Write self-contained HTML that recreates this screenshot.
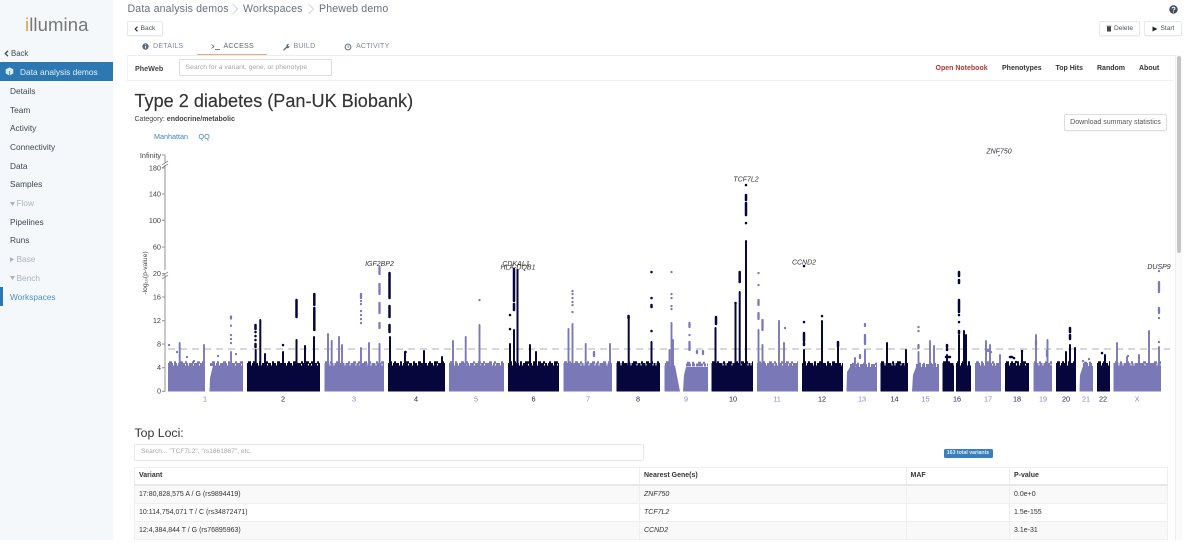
<!DOCTYPE html>
<html lang="en"><head><meta charset="utf-8"><title>Pheweb demo</title>
<style>
html,body{margin:0;padding:0;background:#fff}
body{width:1200px;height:543px;overflow:hidden;position:relative;font-family:"Liberation Sans",sans-serif;color:#333}
#wrap{position:absolute;left:0;top:0;width:1200px;height:543px;overflow:hidden;filter:blur(.35px)}
.a{position:absolute;white-space:nowrap;line-height:1}
#side{position:absolute;left:0;top:0;width:113px;height:543px;background:#f5f8fb}
.nav{position:absolute;left:10px;font-size:8.3px;line-height:1;color:#3d4752;white-space:nowrap}
.dim{color:#a9b4c2}
.tri{position:absolute;left:0;top:2.5px;width:5px;height:4px}
.btn{position:absolute;border:1px solid #e6e8ea;border-radius:2px;background:#fff;box-sizing:border-box;font-size:6.6px;color:#4c5560;text-align:center;box-shadow:0 1px 1px rgba(0,0,0,.04)}
.tab{position:absolute;top:42.5px;font-size:7.1px;line-height:1;color:#7c8a9a;letter-spacing:.2px;white-space:nowrap}
.top{position:absolute;top:65px;font-size:7px;line-height:1;font-weight:bold;color:#333;white-space:nowrap}
table{position:absolute;left:134px;top:466.5px;width:1033px;border-collapse:collapse;table-layout:fixed;font-size:7px;color:#333}
td,th{border:1px solid #efefef;padding:0 0 0 4px;text-align:left;height:18.3px;box-sizing:border-box;font-weight:normal;white-space:nowrap;overflow:hidden}
th{font-weight:bold;border-bottom:2px solid #e8e8e8;height:18px}
tr.g td{background:#f9f9f9}
</style></head><body><div id="wrap">

<div id="side"></div>
<div class="a" style="left:25px;top:15.5px;font-size:18.5px;color:#777;letter-spacing:.1px"><span style="color:#f0a040">i</span>llumina</div>
<svg style="position:absolute;left:4px;top:50px" width="5" height="7" viewBox="0 0 5 7"><path d="M4 .8 1.300 3.500 4 6.200" fill="none" stroke="#3d4752" stroke-width="1.300"/></svg>
<div class="a" style="left:11px;top:49.5px;font-size:7.8px;color:#3d4752">Back</div>
<div style="position:absolute;left:0;top:62px;width:113px;height:19px;background:#2b78b2"></div>
<svg style="position:absolute;left:5px;top:67px" width="9" height="9" viewBox="0 0 9 9"><path d="M4.500.5 8.300 2.300v4.200L4.500 8.500.7 6.500V2.300z" fill="#d8e8f4"/><path d="M4.500 4v4.500" stroke="#2b78b2" stroke-width=".7"/></svg>
<div class="a" style="left:20px;top:67.500px;font-size:8.400px;color:#e8f1f8">Data analysis demos</div>
<div class="nav" style="top:87px">Details</div>
<div class="nav" style="top:105.500px">Team</div>
<div class="nav" style="top:124px">Activity</div>
<div class="nav" style="top:143px">Connectivity</div>
<div class="nav" style="top:161.500px">Data</div>
<div class="nav" style="top:180px">Samples</div>
<div class="nav dim" style="top:199px;padding-left:6.500px"><svg class="tri" viewBox="0 0 5 4"><path d="M0 0h5L2.500 4z" fill="#a9b4c2"/></svg>Flow</div>
<div class="nav" style="top:217.500px">Pipelines</div>
<div class="nav" style="top:236px">Runs</div>
<div class="nav dim" style="top:255px;padding-left:6.500px"><svg class="tri" style="top:2px;width:4px;height:5px" viewBox="0 0 4 5"><path d="M0 0v5l4-2.500z" fill="#a9b4c2"/></svg>Base</div>
<div class="nav dim" style="top:273.500px;padding-left:6.500px"><svg class="tri" viewBox="0 0 5 4"><path d="M0 0h5L2.500 4z" fill="#a9b4c2"/></svg>Bench</div>
<div class="nav" style="top:292.500px;color:#4a90c8">Workspaces</div>
<div style="position:absolute;left:0;top:287px;width:2.500px;height:19px;background:#2b78b2"></div>

<div class="a" style="left:127.500px;top:3.500px;font-size:10.600px;color:#68727e;letter-spacing:.15px">Data analysis demos</div>
<svg style="position:absolute;left:231px;top:3px" width="8" height="12"><path d="M1.500 1 6.500 6l-5 5" fill="none" stroke="#d4d8dc" stroke-width="1.100"/></svg>
<div class="a" style="left:243px;top:3.500px;font-size:10.600px;color:#68727e;letter-spacing:.15px">Workspaces</div>
<svg style="position:absolute;left:307px;top:3px" width="8" height="12"><path d="M1.500 1 6.500 6l-5 5" fill="none" stroke="#d4d8dc" stroke-width="1.100"/></svg>
<div class="a" style="left:319px;top:3.500px;font-size:10.600px;color:#68727e;letter-spacing:.15px">Pheweb demo</div>
<div class="btn" style="left:127px;top:21px;width:36px;height:15px;line-height:13px;padding-left:6px">Back</div>
<svg style="position:absolute;left:134px;top:25.500px" width="5" height="6" viewBox="0 0 5 6"><path d="M3.500.7 1.200 3l2.300 2.300" fill="none" stroke="#333" stroke-width="1.200"/></svg>
<div class="btn" style="left:1099px;top:21px;width:41px;height:15px;line-height:13px;padding-left:8px">Delete</div>
<svg style="position:absolute;left:1105.500px;top:25px" width="6" height="7" viewBox="0 0 6 7"><path d="M1 1.500h4V6.500H1zM.5.700h5v.5h-5z" fill="#444"/></svg>
<div class="btn" style="left:1144px;top:21px;width:38px;height:15px;line-height:13px;padding-left:9px">Start</div>
<svg style="position:absolute;left:1151.500px;top:25.500px" width="6" height="6" viewBox="0 0 6 6"><path d="M.5.500 5.500 3 .5 5.500z" fill="#222"/></svg>
<svg style="position:absolute;left:1169px;top:5px" width="9" height="9" viewBox="0 0 9 9"><circle cx="4.500" cy="4.500" r="4.200" fill="#3f4d5c"/><path d="M3 3.500C3 1.800 6 1.800 6 3.400 6 4.500 4.500 4.400 4.500 5.500" fill="none" stroke="#fff" stroke-width="1"/><circle cx="4.500" cy="7" r=".6" fill="#fff"/></svg>

<svg style="position:absolute;left:142px;top:43px" width="7" height="7" viewBox="0 0 7 7"><circle cx="3.500" cy="3.500" r="3.200" fill="#5c6c7c"/><path d="M3.500 3v2.400M3.500 1.400v.9" stroke="#fff" stroke-width=".9"/></svg>
<div class="tab" style="left:153px">DETAILS</div>
<svg style="position:absolute;left:211px;top:43px" width="10" height="8"><path d="M.5 1.500 3 3.500.5 5.500M4 6.500h5" fill="none" stroke="#4c5560" stroke-width=".8"/></svg>
<div class="tab" style="left:223.500px;color:#5c6672">ACCESS</div>
<div style="position:absolute;left:197px;top:53.500px;width:70px;height:1.200px;background:#f3a96a"></div>
<svg style="position:absolute;left:282px;top:43px" width="8" height="8" viewBox="0 0 8 8"><path d="M1 7 4.500 3.400C4 1.800 5.600.4 7.200 1L5.800 2.400l.4 1L7.400 3C7.800 4.600 6 5.800 4.800 5L2 7.800z" fill="#5c6c7c"/></svg>
<div class="tab" style="left:293.500px">BUILD</div>
<svg style="position:absolute;left:344px;top:43px" width="8" height="8" viewBox="0 0 8 8"><circle cx="4" cy="4" r="2.900" fill="none" stroke="#5c6c7c" stroke-width="1"/><path d="M4 2.500V4h1.300" fill="none" stroke="#5c6c7c" stroke-width=".7"/></svg>
<div class="tab" style="left:356px">ACTIVITY</div>

<div style="position:absolute;left:127px;top:54.500px;width:1055px;height:489px;border-top:1px solid #eceef0;box-sizing:border-box"></div>
<div style="position:absolute;left:127px;top:80px;width:1047px;height:1px;background:#f0f0f0"></div>
<div style="position:absolute;left:127px;top:55px;width:1px;height:25px;background:#f2f2f2"></div>
<div style="position:absolute;left:1174.500px;top:55px;width:7.500px;height:488px;background:#fafafa;border-left:1px solid #eee;box-sizing:border-box"></div>
<div style="position:absolute;left:1177px;top:56px;width:4px;height:197px;background:#c4c4c4;border-radius:2px"></div>
<div class="a" style="left:135px;top:64.500px;font-size:7.200px;font-weight:bold;color:#444">PheWeb</div>
<div style="position:absolute;left:179px;top:59px;width:153px;height:17px;border:1px solid #dcdcdc;border-radius:2px;box-sizing:border-box;font-size:6.800px;color:#a8a8a8;line-height:15.500px;padding-left:5.500px;white-space:nowrap">Search for a variant, gene, or phenotype</div>
<div class="top" style="left:935.500px;color:#a83a3a">Open Notebook</div>
<div class="top" style="left:1002px">Phenotypes</div>
<div class="top" style="left:1055.500px">Top Hits</div>
<div class="top" style="left:1097px">Random</div>
<div class="top" style="left:1139px">About</div>

<div class="a" style="left:134.500px;top:92px;font-size:18.100px;color:#333;-webkit-text-stroke:.15px #333">Type 2 diabetes (Pan-UK Biobank)</div>
<div class="a" style="left:134.500px;top:115.500px;font-size:7px;color:#444">Category: <b>endocrine/metabolic</b></div>
<div class="a" style="left:154px;top:132.500px;font-size:7.200px;color:#3f82bd">Manhattan</div>
<div class="a" style="left:198.500px;top:132.500px;font-size:7.200px;color:#3f82bd">QQ</div>
<div class="btn" style="left:1064px;top:114px;width:103px;height:17px;line-height:15.500px;font-size:7px;color:#555;border-color:#ddd">Download summary statistics</div>

<svg style="position:absolute;left:0;top:0" width="1200" height="543">
<g font-family="Liberation Sans, sans-serif" font-size="7.300" fill="#444" text-anchor="end">
<text x="161" y="158">Infinity</text><text x="161" y="170.500">180</text><text x="161" y="196.500">140</text><text x="161" y="223">100</text><text x="161" y="249.500">60</text><text x="161" y="276">20</text><text x="161" y="299.500">16</text><text x="161" y="323">12</text><text x="161" y="346.500">8</text><text x="161" y="370">4</text><text x="161" y="393.500">0</text>
</g>
<text transform="translate(147 273) rotate(-90)" font-family="Liberation Sans, sans-serif" font-size="6.800" fill="#444" text-anchor="middle">-log₁₀(p-value)</text>
<path d="M165 391.500V275M165 270V165M162 391.300h3M162 367.700h3M162 344h3M162 320.700h3M162 297h3M162 273.500h3M162 247h3M162 220.300h3M162 194h3M162 168h3M162 155h3v8" fill="none" stroke="#9a9a9a" stroke-width="1.100"/>
<path d="M162 276l6-4M162 279l6-4M162 165l6-4M162 168l6-4" stroke="#666" stroke-width=".7"/>
<path d="M168 349H1170" stroke="#d8d8d4" stroke-width="2" stroke-dasharray="7 5" fill="none"/>

<!-- light chromosomes -->
<g fill="#7b78b8">
<rect x="168" y="365.500" width="37" height="26"/><polygon points="209.500,391.500 210,378 213,365.500 243,365.500 243,391.500"/><rect x="324.500" y="365.500" width="59.500" height="26"/><rect x="449" y="365.500" width="55" height="26"/><rect x="563.500" y="365.500" width="48.500" height="26"/><polygon points="664.500,391.500 664.500,365.500 675,365.500 680,391.500"/><polygon points="683,391.500 684,375 686,367 708,367 708,391.500"/><rect x="757" y="365.500" width="41" height="26"/><polygon points="846.500,391.500 847,372 850,367 877,367 877,391.500"/><polygon points="912,391.500 913,375 916,367 939,367 939,391.500"/><rect x="975" y="365.500" width="26" height="26"/><rect x="1033.500" y="365.500" width="18.500" height="26"/><polygon points="1079.500,391.500 1080,375 1083,366 1093,366 1093,391.500"/><rect x="1113.500" y="365.500" width="47.500" height="26"/>
</g>
<path fill="none" stroke="#7b78b8" stroke-width="3" stroke-dasharray="5 1 3 1 7 1 2 1 4 1" d="M168 364.500H205M210 364.500H243M324.500 364.500H384M449 364.500H504M563.500 364.500H612M665 364.500H675M686 365H708M757 364.500H798M850 365.500H877M916 365.500H939M975 364.500H1001M1033.500 364.500H1052M1083 364.500H1093M1113.500 364.500H1161"/>
<path fill="none" stroke="#7b78b8" stroke-width="2.500" stroke-dasharray="3 2 2 4 3 2 2 5 2 3" d="M169 362.500H205M212 362.500H243M325 362.500H384M450 362.500H504M564 362.500H612M666 362.500H675M687 363H708M758 362.500H798M852 364H877M918 364H939M976 362.500H1001M1034 362.500H1052M1084 363H1092M1115 362.500H1161"/>
<path fill="none" stroke="#7b78b8" stroke-width="1.900" stroke-linecap="round" d="M179.700 366V343M204 366V345M231 366V352M328 366V334M331.700 366V341M339 366V337M342 366V345M361 366V348M369 366V343M379.500 366V344M453 366V341M465.700 366V337M479.500 366V325M568.500 366V329M572.500 366V324M585.700 366V344M610 366V344M671.500 366V323M758.500 366V330M762.500 366V345M779 366V321M784 366V343M865 366V350M855 366V358M918.500 366V352M930 366V341M934 366V346M986 366V341M990 366V345M1036 366V335M1047.500 366V340M1117 366V343M1149 366V331M1159 366V347M1139 366V355M1127 366V357M1000 366V355M673 366V340M669.500 366V350"/>
<path fill="none" stroke="#7b78b8" stroke-width="2.300" stroke-linecap="round" d="M169 345v.1M177 352v.1M187 357v.1M194 361v.1M218 356v.1M231 316.500v2M231 325.700v.1M231 335v.1M231 339v.1M231 343v.1M236 354v.1M361 294v4M361 301v.1M361 304v.1M361 311v.1M361 315v.1M361 319v.1M361 323v.1M379.500 267v7M379.500 284v10M379.500 303v10M379.500 323v5M479.500 300v.1M572.500 291v.1M572.500 294v.1M572.500 298v.1M572.500 302v.1M572.500 305v.1M572.500 312v.1M594 352v4M671.500 272v.1M671.500 294v.1M671.500 298v.1M671.500 306v.1M671.500 309v.1M689.500 323v4M689.500 335v.1M689.500 342v8M697 351v2M703 351v3M758.500 273v.1M758.500 285v.1M758.500 300v5M758.500 313v6M762.500 320v10M785 328v.1M865 324v2M865 335v9M860 355v3M918.500 327v.1M918.500 331v.1M918.500 345v3M988 350v1M991 352v.1M1036 341v4M1047 351v5M1083 361v.1M1089 359v.1M1128 356v.1M1159 271v.1M1159 282v10M1159 308v5M1159 318v.1M1159 342v.1"/>
<!-- dark chromosomes -->
<g fill="#06053c">
<rect x="247" y="365.500" width="73" height="26"/><rect x="388" y="365.500" width="57" height="26"/><rect x="508" y="365.500" width="51" height="26"/><rect x="616.500" y="365.500" width="43.500" height="26"/><rect x="711.500" y="365.500" width="41.500" height="26"/><rect x="802" y="365.500" width="41" height="26"/><rect x="880.500" y="365.500" width="27.500" height="26"/><rect x="942.500" y="365.500" width="11.500" height="26"/><rect x="956" y="365.500" width="15" height="26"/><rect x="1005" y="365.500" width="24" height="26"/><rect x="1056" y="365.500" width="20" height="26"/><rect x="1097" y="365.500" width="13" height="26"/>
</g>
<path fill="none" stroke="#06053c" stroke-width="3" stroke-dasharray="4 1 6 1 2 1 5 1 3 1" d="M247 364.500H320M388 364.500H445M508 364.500H559M616.500 364.500H660M711.500 364.500H753M802 364.500H843M880.500 364.500H908M942.500 364.500H954M956 364.500H971M1005 364.500H1029M1056 364.500H1076M1097 364.500H1110"/>
<path fill="none" stroke="#06053c" stroke-width="2.500" stroke-dasharray="3 2 2 4 2 3 4 4 2 3" d="M248 362.500H320M389 362.500H445M509 362.500H559M617 362.500H660M712 362.500H753M803 362.500H843M881 362.500H908M943 362.500H954M957 362.500H971M1006 362.500H1029M1057 362.500H1076M1098 362.500H1110"/>
<path fill="none" stroke="#06053c" stroke-width="2" stroke-linecap="round" d="M255.700 366V350M260.300 366V320M296.500 366V340M314 366V337M305 366V346M283 366V352M265 366V354M390 366V337M405 366V352M424 366V351M442 366V357M510 366V344M514 366V330M517.500 366V270M530 366V345M536 366V352M628.700 366V316M651.500 366V342M715.500 366V328M735.500 366V303M739.700 366V292M746 366V241M804 366V350M822 366V321M838 366V342M887 366V343M906 366V350M947 366V355M959 366V335M964 366V331M966 366V335M1022 366V351M1070 366V345M1075 366V348M1066 366V352M1105 366V355"/>
<path fill="none" stroke="#06053c" stroke-width="2.500" stroke-linecap="round" d="M255.500 325v4M255.500 332v.1M255.500 336v.1M255.500 340v.1M255.500 344v3M296.500 300v17M314.300 294v11M314.300 308v22M283 345v.1M389.500 273v25M389.500 306v11M389.500 325v7M405.500 352v.1M510 315v.1M510 329v.1M514 269v32M514 304v6M628.500 316v2M651.500 272v.1M651.500 298v.1M651.500 305v2M651.500 331v.1M716 317v7M746 185v.1M746 195v5M746 203v12M746 223v.1M739.700 272v10M735.500 303v.1M804 266v.1M804 322v.1M804 333v8M804 343v2M822 316v.1M838 342v4M959 272v4M959 280v3M959 300v12M959 315v.1M959 322v.1M959 331v2M947 345v2M947 349v1M946 357h4M1070 328v4M1070 335v4M1022 351v.1M1010 357h2M1014 358v.1M1102 353v.1M1016 362v.1"/>

<g font-family="Liberation Sans, sans-serif" font-size="7" font-style="italic" fill="#333" text-anchor="middle">
<text x="999" y="153.500">ZNF750</text><text x="746" y="181.500">TCF7L2</text><text x="379.500" y="266">IGF2BP2</text><text x="516" y="266">CDKAL1</text><text x="518" y="269.500">HLA-DQB1</text><text x="804" y="264.500">CCND2</text><text x="1159" y="269">DUSP9</text>
</g>
<circle cx="999" cy="155.500" r=".8" fill="#5a58b0"/>
<g font-family="Liberation Sans, sans-serif" font-size="7.300" text-anchor="middle" fill="#8a88c4">
<text x="205" y="401.500">1</text><text x="354" y="401.500">3</text><text x="476" y="401.500">5</text><text x="588" y="401.500">7</text><text x="686" y="401.500">9</text><text x="777" y="401.500">11</text><text x="862" y="401.500">13</text><text x="925.500" y="401.500">15</text><text x="988" y="401.500">17</text><text x="1043" y="401.500">19</text><text x="1086" y="401.500">21</text><text x="1137" y="401.500">X</text>
</g>
<g font-family="Liberation Sans, sans-serif" font-size="7.300" text-anchor="middle" fill="#22214f">
<text x="283" y="401.500">2</text><text x="416" y="401.500">4</text><text x="533.500" y="401.500">6</text><text x="638" y="401.500">8</text><text x="733" y="401.500">10</text><text x="822" y="401.500">12</text><text x="894.500" y="401.500">14</text><text x="957" y="401.500">16</text><text x="1017" y="401.500">18</text><text x="1066" y="401.500">20</text><text x="1103" y="401.500">22</text>
</g>
</svg>

<div class="a" style="left:134.500px;top:427px;font-size:12.300px;color:#333">Top Loci:</div>
<div style="position:absolute;left:134px;top:444px;width:510px;height:16.500px;border:1px solid #e8e8e8;border-radius:2px;box-sizing:border-box;font-size:6.600px;color:#a8a8a8;line-height:14.500px;padding-left:6px;white-space:nowrap">Search... "TCF7L2", "rs1861867", etc.</div>
<div class="a" style="left:943.500px;top:449px;width:49px;height:9px;background:#3a7fbd;border-radius:1.500px;color:#dfeaf4;font-size:5.200px;font-weight:bold;line-height:9px;text-align:center">163 total variants</div>

<table>
<colgroup><col style="width:505px"><col style="width:266.500px"><col style="width:103.500px"><col style="width:158px"></colgroup>
<tr><th>Variant</th><th>Nearest Gene(s)</th><th>MAF</th><th>P-value</th></tr>
<tr class="g"><td>17:80,828,575 A / G (rs9894419)</td><td><i>ZNF750</i></td><td></td><td>0.0e+0</td></tr>
<tr><td>10:114,754,071 T / C (rs34872471)</td><td><i>TCF7L2</i></td><td></td><td>1.5e-155</td></tr>
<tr class="g"><td>12:4,384,844 T / G (rs76895963)</td><td><i>CCND2</i></td><td></td><td>3.1e-31</td></tr>
</table>
<div style="position:absolute;left:0;top:539.500px;width:1200px;height:4px;background:#fff"></div>
</div></body></html>
